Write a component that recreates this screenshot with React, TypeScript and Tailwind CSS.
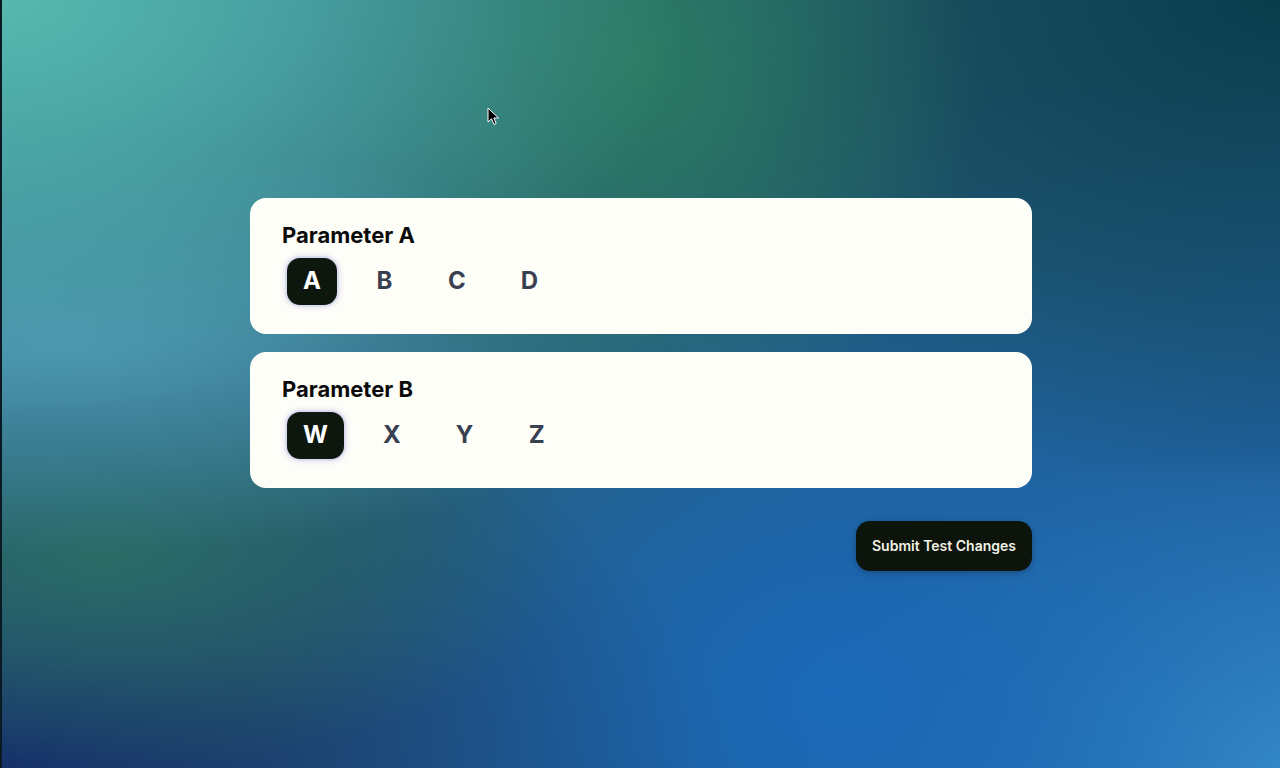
import * as React from "react";

const paramA = ["A", "B", "C", "D"];
const paramB = ["W", "X", "Y", "Z"];

function OptionRow({
  options,
  selected,
  onSelect,
}: {
  options: string[];
  selected: string;
  onSelect: (v: string) => void;
}) {
  return (
    <div className="flex items-center gap-[23px] pl-[5px]">
      {options.map((opt) => (
        <button
          key={opt}
          onClick={() => onSelect(opt)}
          className={
            opt === selected
              ? "h-[47px] min-w-[49px] rounded-[13px] bg-[#0e170d] px-4 text-[24px] font-bold text-white shadow-[0_0_0_2px_rgba(214,214,240,0.7),0_0_6px_2px_rgba(190,190,230,0.5)]"
              : "h-[47px] min-w-[49px] rounded-[13px] px-4 text-[24px] font-bold text-[#394150]"
          }
        >
          {opt}
        </button>
      ))}
    </div>
  );
}

function ParamCard({
  title,
  options,
  selected,
  onSelect,
}: {
  title: string;
  options: string[];
  selected: string;
  onSelect: (v: string) => void;
}) {
  return (
    <div className="flex h-[136px] flex-col gap-[9px] rounded-2xl bg-[#fefef9] px-8 pt-[23px]">
      <h2 className="text-[22px] font-bold leading-7 text-[#0a0a0a]">{title}</h2>
      <OptionRow options={options} selected={selected} onSelect={onSelect} />
    </div>
  );
}

export default function App() {
  const [a, setA] = React.useState("A");
  const [b, setB] = React.useState("W");

  return (
    <div
      className="relative flex h-[768px] w-[1280px] items-center justify-center overflow-hidden border-l-2 border-[#0b1a22] bg-[#1f5a8a] bg-[radial-gradient(ellipse_at_0%_0%,#55b8ae_0%,rgba(85,184,174,0)_38%),radial-gradient(ellipse_at_50%_8%,#2a7a62_0%,rgba(42,122,98,0)_38%),radial-gradient(ellipse_at_100%_0%,#0a3d4c_0%,rgba(10,61,76,0)_45%),radial-gradient(ellipse_at_5%_45%,#4a93b0_0%,rgba(74,147,176,0)_35%),radial-gradient(ellipse_at_8%_72%,#2a6c66_0%,rgba(42,108,102,0)_28%),radial-gradient(ellipse_at_0%_100%,#15306a_0%,rgba(21,48,106,0)_40%),radial-gradient(ellipse_at_65%_90%,#1a68b8_0%,rgba(26,104,184,0)_50%),radial-gradient(ellipse_at_100%_100%,#3a90c8_0%,rgba(58,144,200,0)_30%),linear-gradient(135deg,#3a8a9a_0%,#2a5e72_45%,#1b5fa8_100%)] font-['Inter',sans-serif]"
    >
      {/* mouse pointer */}
      <svg
        className="absolute left-[485px] top-[107px]"
        width="13"
        height="19"
        viewBox="0 0 13 19"
      >
        <path
          d="M1 1 L1 15 L4.5 11.8 L7 17.5 L9.2 16.5 L6.8 11 L11.5 11 Z"
          fill="#000"
          stroke="#fff"
          strokeWidth="1"
          strokeLinejoin="round"
        />
      </svg>

      <div className="flex w-[782px] flex-col">
        <div className="flex flex-col gap-[18px]">
          <ParamCard title="Parameter A" options={paramA} selected={a} onSelect={setA} />
          <ParamCard title="Parameter B" options={paramB} selected={b} onSelect={setB} />
        </div>

        <div className="mt-[33px] flex justify-end">
          <button className="h-[50px] w-[176px] rounded-[14px] bg-[#0c140c] text-[14px] font-semibold text-[#f3f1e4] shadow-[0_2px_6px_rgba(0,0,0,0.25)]">
            Submit Test Changes
          </button>
        </div>
      </div>
    </div>
  );
}
